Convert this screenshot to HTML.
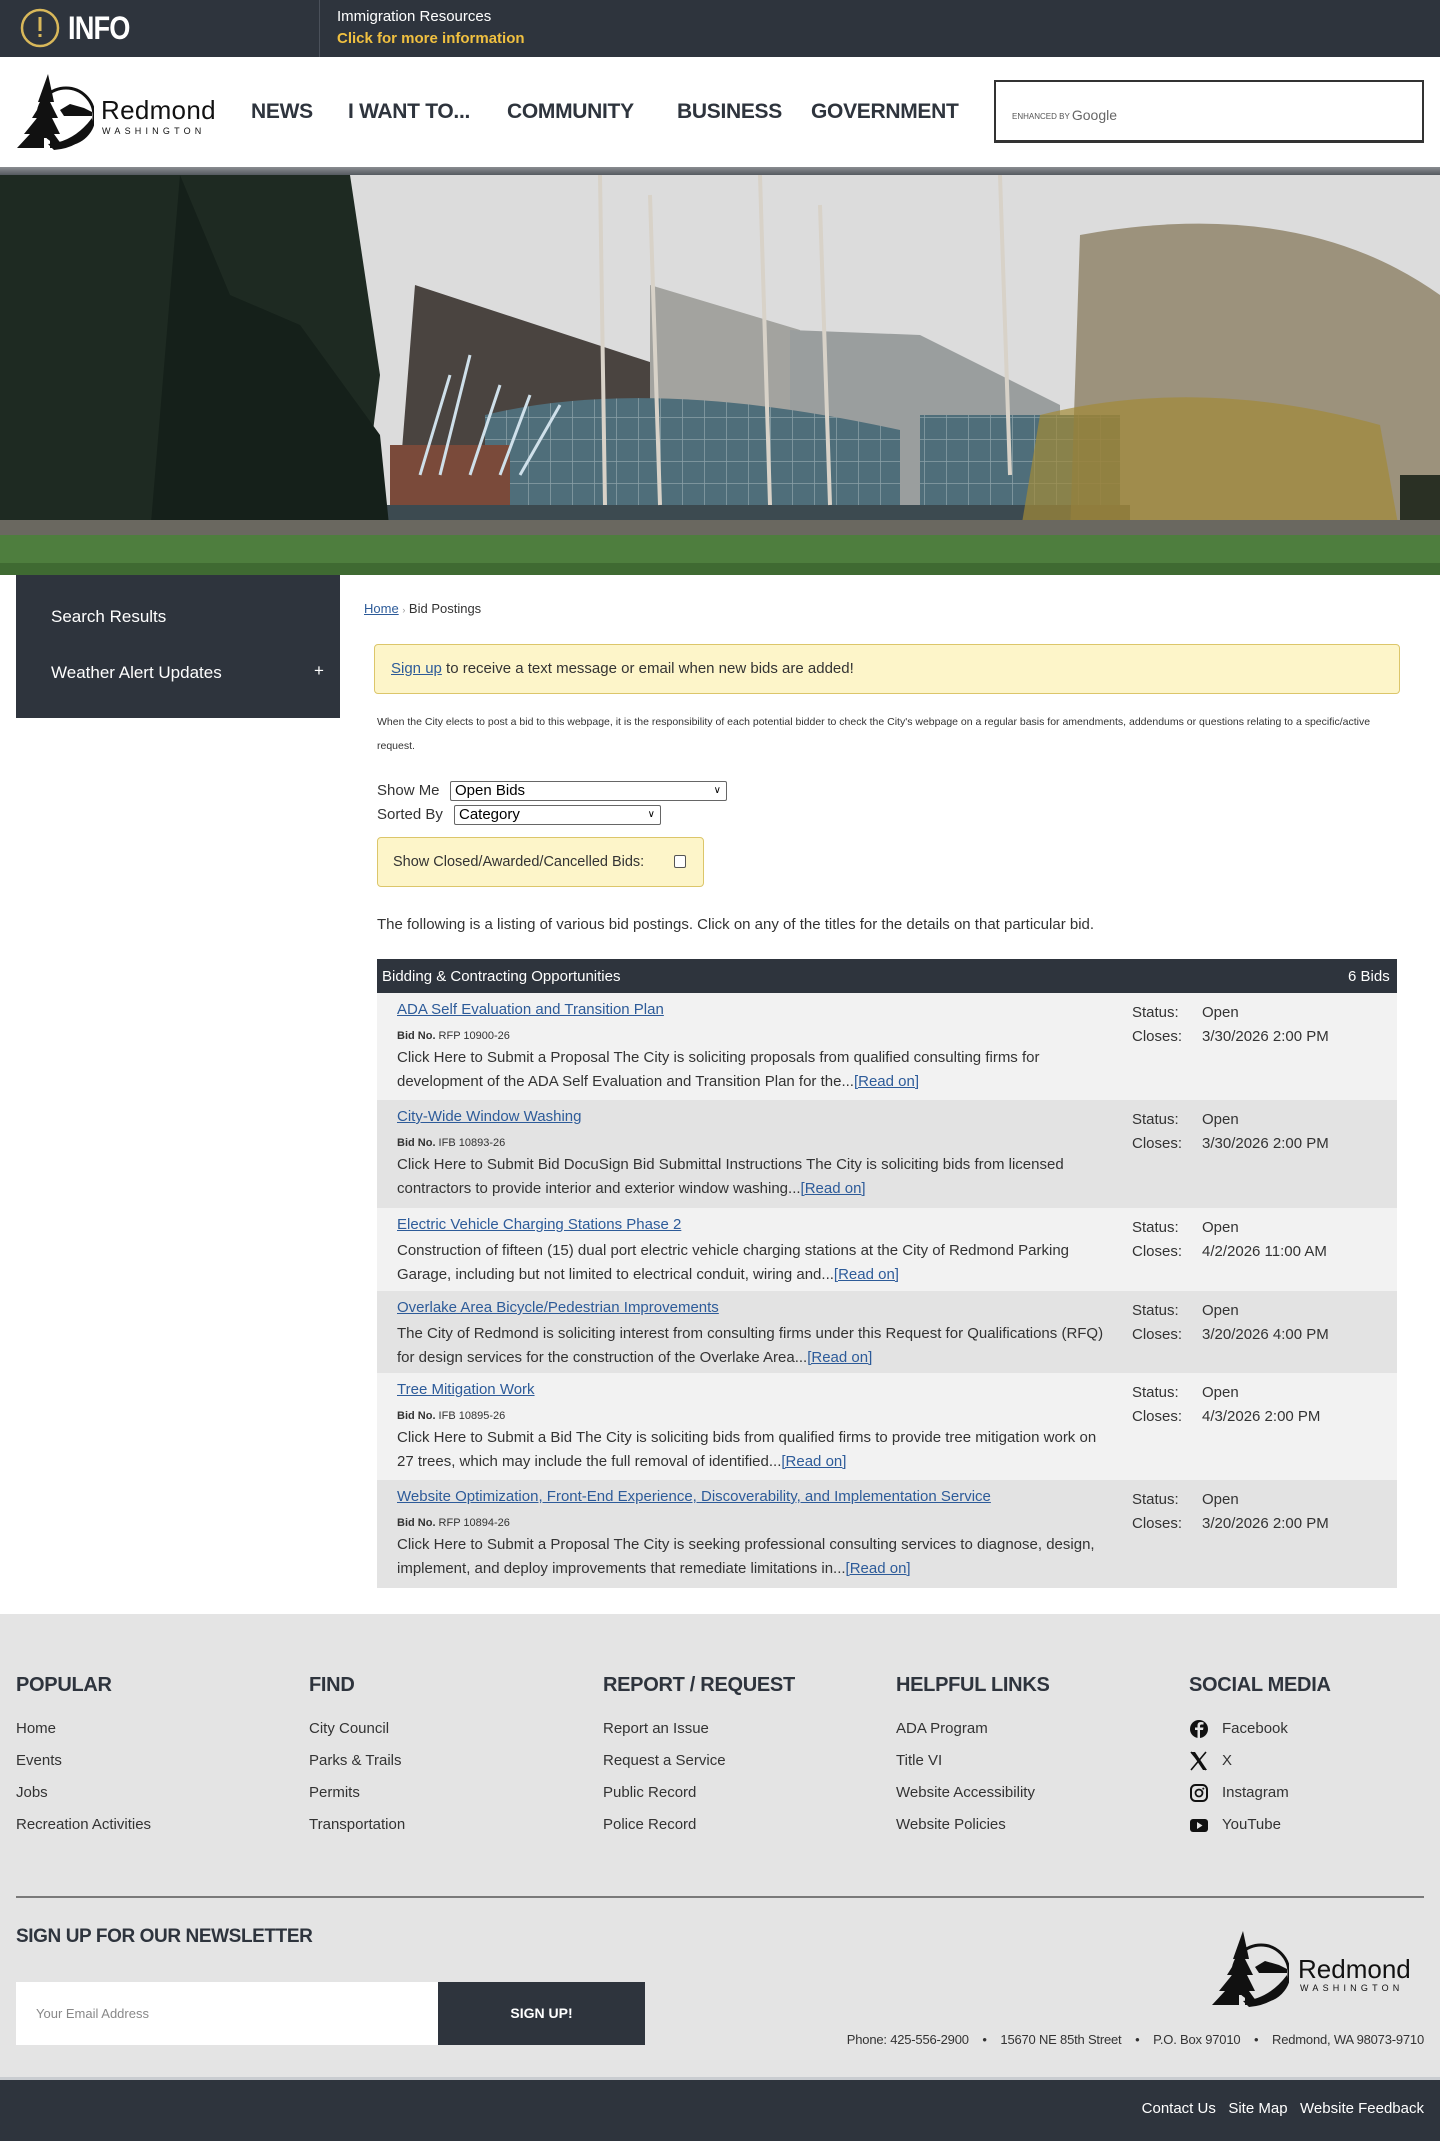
<!DOCTYPE html>
<html><head><meta charset="utf-8">
<style>
*{box-sizing:border-box;margin:0;padding:0}
body{width:1440px;height:2141px;font-family:"Liberation Sans",sans-serif;color:#2e343d;background:#fff;position:relative;overflow:hidden}
.abs{position:absolute}
a{color:#2d5b99}
.top{left:0;top:0;width:1440px;height:57px;background:#2e343d}
.hdr{left:0;top:57px;width:1440px;height:110px;background:#fff}
.nav{top:100px;font-weight:bold;font-size:21px;color:#2e343d;letter-spacing:-0.3px}
.side{left:16px;top:575px;width:324px;height:143px;background:#2e343d;color:#fff;font-size:17px}
.row{position:absolute;left:377px;width:1020px}
.row .t{position:absolute;left:20px;top:8px;font-size:15px}
.row .n{position:absolute;left:20px;font-size:11px;color:#333}
.row .d{position:absolute;left:20px;width:715px;font-size:15px;line-height:24px;color:#333}
.row .s{position:absolute;left:755px;top:8px;font-size:15px;line-height:24px;color:#333}
.row .s span{display:inline-block;width:70px}
.fh{top:1674px;font-size:20px;font-weight:bold;color:#2e343d;letter-spacing:-0.3px}
.fl{font-size:15px;color:#333;line-height:32px}
</style></head><body>
<div class="abs top"></div>
<svg class="abs" style="left:18px;top:8px" width="44" height="42"><circle cx="22" cy="20" r="18" fill="none" stroke="#d9b85a" stroke-width="2.5"/><rect x="20.5" y="9" width="3" height="14" fill="#d9b85a"/><rect x="20.5" y="26" width="3" height="3" fill="#d9b85a"/></svg>
<div class="abs" style="left:68px;top:10px;font-size:32px;font-weight:bold;color:#fff;letter-spacing:-1px;transform:scaleX(.85);transform-origin:left">INFO</div>
<div class="abs" style="left:319px;top:0;width:1px;height:57px;background:#4a505a"></div>
<div class="abs" style="left:337px;top:8px;font-size:15px;color:#fff">Immigration Resources</div>
<div class="abs" style="left:337px;top:30px;font-size:15px;color:#f0c040;font-weight:bold">Click for more information</div>

<div class="abs hdr"></div>
<svg class="abs" style="left:14px;top:72px" width="80" height="80" viewBox="0 0 80 80">
<circle cx="52" cy="44" r="28" fill="none" stroke="#111" stroke-width="3"/>
<path d="M34 2 L24 30 L28 30 L18 46 L23 46 L10 62 L16 62 L3 76 L30 76 L30 66 L36 66 L36 76 L50 76 L40 62 L46 62 L38 46 L44 46 L36 30 L40 30 Z" fill="#111"/>
<path d="M34 72 Q60 70 78 46 L78 56 Q66 76 40 78 Z" fill="#111"/>
<path d="M46 38 L56 32 L70 36 L78 40 L78 44 L50 44 Z" fill="#111"/>
</svg>
<div class="abs" style="left:101px;top:95px;font-size:26px;color:#111;letter-spacing:.3px">Redmond</div>
<div class="abs" style="left:102px;top:126px;font-size:9px;color:#111;letter-spacing:4.2px">WASHINGTON</div>
<div class="abs nav" style="left:251px">NEWS</div>
<div class="abs nav" style="left:348px">I WANT TO...</div>
<div class="abs nav" style="left:507px">COMMUNITY</div>
<div class="abs nav" style="left:677px">BUSINESS</div>
<div class="abs nav" style="left:811px">GOVERNMENT</div>
<div class="abs" style="left:994px;top:80px;width:430px;height:63px;border:2px solid #333;border-bottom-width:3px"></div>
<div class="abs" style="left:1012px;top:106px;font-size:8px;color:#555">ENHANCED BY <span style="font-size:14px;color:#666;position:relative;top:1px">Google</span></div>
<div class="abs" style="left:0;top:167px;width:1440px;height:8px;background:linear-gradient(#8a8d91,#555a60)"></div>

<svg class="abs" style="left:0;top:175px" width="1440" height="400" viewBox="0 0 1440 400" preserveAspectRatio="none">
<defs>
<pattern id="g" width="22" height="22" patternUnits="userSpaceOnUse"><rect width="22" height="22" fill="#4f6e7a"/><path d="M0 0H22M0 0V22" stroke="#8aa0a8" stroke-width="1.5"/></pattern>
</defs>
<rect width="1440" height="400" fill="#dcdcdc"/>
<polygon points="400,300 415,110 720,210 720,300" fill="#4a4440"/>
<polygon points="650,110 800,155 820,340 650,340" fill="#a3a39f"/>
<polygon points="790,155 920,160 1060,230 1060,350 790,350" fill="#9a9e9e"/>
<rect x="920" y="240" width="200" height="110" fill="url(#g)"/>
<path d="M485 340 L485 240 Q650 200 900 255 L900 340 Z" fill="url(#g)"/>
<rect x="390" y="270" width="120" height="75" fill="#7a4a3a"/>
<path d="M420 300 L450 200 M440 300 L470 180 M470 300 L500 210 M500 300 L530 220 M520 300 L560 230" stroke="#cfe0ea" stroke-width="3"/>
<rect x="330" y="330" width="800" height="25" fill="#3c4a50"/>
<path d="M0 0 L350 0 L380 200 L360 360 L0 360 Z" fill="#1e2a22"/>
<path d="M180 0 L230 120 L300 150 L380 260 L390 360 L150 360 Z" fill="#15201a"/>
<path d="M600 0 L605 330 M650 20 L660 330 M760 0 L770 330 M820 30 L830 330 M1000 0 L1010 300" stroke="#d8d2c8" stroke-width="4"/>
<path d="M1080 60 Q1300 20 1440 120 L1440 360 L1070 360 Z" fill="#7a6a48" opacity=".65"/>
<path d="M1040 240 Q1200 200 1380 250 L1400 360 L1020 360 Z" fill="#a28a38" opacity=".7"/>
<rect x="1400" y="300" width="40" height="60" fill="#2a3024"/>
<rect x="0" y="345" width="1440" height="18" fill="#6a6860"/>
<rect x="0" y="360" width="1440" height="40" fill="#4e7e3e"/>
<rect x="0" y="388" width="1440" height="12" fill="#3f6a32"/>
</svg>

<div class="abs side"></div>
<div class="abs" style="left:51px;top:607px;font-size:17px;color:#fff">Search Results</div>
<div class="abs" style="left:51px;top:663px;font-size:17px;color:#fff">Weather Alert Updates</div>
<div class="abs" style="left:314px;top:661px;font-size:17px;color:#fff">+</div>

<div class="abs" style="left:364px;top:601px;font-size:13px;color:#333"><a href="#">Home</a> <span style="color:#999;font-size:9px">›</span> Bid Postings</div>
<div class="abs" style="left:374px;top:644px;width:1026px;height:50px;background:#fdf5c9;border:1px solid #dcc66a;border-radius:4px"></div>
<div class="abs" style="left:391px;top:660px;font-size:15px;color:#333"><a href="#">Sign up</a> to receive a text message or email when new bids are added!</div>
<div class="abs" style="left:377px;top:710px;width:1000px;font-size:10.5px;line-height:24px;color:#333">When the City elects to post a bid to this webpage, it is the responsibility of each potential bidder to check the City's webpage on a regular basis for amendments, addendums or questions relating to a specific/active request.</div>
<div class="abs" style="left:377px;top:782px;font-size:15px;color:#333">Show Me</div>
<div class="abs" style="left:450px;top:781px;width:277px;height:20px;border:1px solid #666;border-radius:2px;font-size:15px;padding-left:4px;line-height:18px;color:#000">Open Bids<span style="position:absolute;right:5px;font-size:10px">∨</span></div>
<div class="abs" style="left:377px;top:806px;font-size:15px;color:#333">Sorted By</div>
<div class="abs" style="left:454px;top:805px;width:207px;height:20px;border:1px solid #666;border-radius:2px;font-size:15px;padding-left:4px;line-height:18px;color:#000">Category<span style="position:absolute;right:5px;font-size:10px">∨</span></div>
<div class="abs" style="left:377px;top:837px;width:327px;height:50px;background:#fdf5c9;border:1px solid #dcc66a;border-radius:4px"></div>
<div class="abs" style="left:393px;top:854px;font-size:14.5px;color:#333">Show Closed/Awarded/Cancelled Bids:</div>
<div class="abs" style="left:674px;top:855px;width:12px;height:13px;border:1px solid #555;border-radius:2px;background:#fff"></div>
<div class="abs" style="left:377px;top:916px;font-size:15px;color:#333">The following is a listing of various bid postings. Click on any of the titles for the details on that particular bid.</div>

<div class="abs" style="left:377px;top:959px;width:1020px;height:34px;background:#2e343d"></div>
<div class="abs" style="left:382px;top:968px;font-size:15px;color:#fff">Bidding &amp; Contracting Opportunities</div>
<div class="abs" style="left:1348px;top:968px;font-size:15px;color:#fff">6 Bids</div>

<div class="row" style="top:993px;height:107px;background:#f2f2f2">
<a class="t" href="#">ADA Self Evaluation and Transition Plan</a>
<div class="n" style="top:37px"><b>Bid No.</b> RFP 10900-26</div>
<div class="d" style="top:53px">Click Here to Submit a Proposal The City is soliciting proposals from qualified consulting firms for development of the ADA Self Evaluation and Transition Plan for the...<a href="#">[Read on]</a></div>
<div class="s"><span>Status:</span>Open<br><span>Closes:</span>3/30/2026 2:00 PM</div></div>
<div class="row" style="top:1100px;height:108px;background:#e3e3e3">
<a class="t" href="#">City-Wide Window Washing</a>
<div class="n" style="top:37px"><b>Bid No.</b> IFB 10893-26</div>
<div class="d" style="top:53px">Click Here to Submit Bid DocuSign Bid Submittal Instructions The City is soliciting bids from licensed contractors to provide interior and exterior window washing...<a href="#">[Read on]</a></div>
<div class="s"><span>Status:</span>Open<br><span>Closes:</span>3/30/2026 2:00 PM</div></div>
<div class="row" style="top:1208px;height:83px;background:#f2f2f2">
<a class="t" href="#">Electric Vehicle Charging Stations Phase 2</a>
<div class="d" style="top:31px">Construction of fifteen (15) dual port electric vehicle charging stations at the City of Redmond Parking Garage, including but not limited to electrical conduit, wiring and...<a href="#">[Read on]</a></div>
<div class="s"><span>Status:</span>Open<br><span>Closes:</span>4/2/2026 11:00 AM</div></div>
<div class="row" style="top:1291px;height:82px;background:#e3e3e3">
<a class="t" href="#">Overlake Area Bicycle/Pedestrian Improvements</a>
<div class="d" style="top:31px">The City of Redmond is soliciting interest from consulting firms under this Request for Qualifications (RFQ) for design services for the construction of the Overlake Area...<a href="#">[Read on]</a></div>
<div class="s"><span>Status:</span>Open<br><span>Closes:</span>3/20/2026 4:00 PM</div></div>
<div class="row" style="top:1373px;height:107px;background:#f2f2f2">
<a class="t" href="#">Tree Mitigation Work</a>
<div class="n" style="top:37px"><b>Bid No.</b> IFB 10895-26</div>
<div class="d" style="top:53px">Click Here to Submit a Bid The City is soliciting bids from qualified firms to provide tree mitigation work on 27 trees, which may include the full removal of identified...<a href="#">[Read on]</a></div>
<div class="s"><span>Status:</span>Open<br><span>Closes:</span>4/3/2026 2:00 PM</div></div>
<div class="row" style="top:1480px;height:108px;background:#e3e3e3">
<a class="t" href="#">Website Optimization, Front-End Experience, Discoverability, and Implementation Service</a>
<div class="n" style="top:37px"><b>Bid No.</b> RFP 10894-26</div>
<div class="d" style="top:53px">Click Here to Submit a Proposal The City is seeking professional consulting services to diagnose, design, implement, and deploy improvements that remediate limitations in...<a href="#">[Read on]</a></div>
<div class="s"><span>Status:</span>Open<br><span>Closes:</span>3/20/2026 2:00 PM</div></div>

<div class="abs" style="left:0;top:1614px;width:1440px;height:463px;background:#e4e4e4"></div>
<div class="abs fh" style="left:16px">POPULAR</div>
<div class="abs fh" style="left:309px">FIND</div>
<div class="abs fh" style="left:603px">REPORT / REQUEST</div>
<div class="abs fh" style="left:896px">HELPFUL LINKS</div>
<div class="abs fh" style="left:1189px">SOCIAL MEDIA</div>
<div class="abs fl" style="left:16px;top:1713px">Home<br>Events<br>Jobs<br>Recreation Activities</div>
<div class="abs fl" style="left:309px;top:1713px">City Council<br>Parks &amp; Trails<br>Permits<br>Transportation</div>
<div class="abs fl" style="left:603px;top:1713px">Report an Issue<br>Request a Service<br>Public Record<br>Police Record</div>
<div class="abs fl" style="left:896px;top:1713px">ADA Program<br>Title VI<br>Website Accessibility<br>Website Policies</div>
<div class="abs fl" style="left:1222px;top:1713px">Facebook<br>X<br>Instagram<br>YouTube</div>
<svg class="abs" style="left:1189px;top:1718px" width="22" height="120">
<circle cx="10" cy="11" r="9" fill="#111"/><path d="M11 20 V12 H14 L14.5 9.5 H11 V8 Q11 6.5 12.5 6.5 H14.5 V4.3 Q13 4 11.8 4 Q8.5 4 8.5 7.5 V9.5 H6 V12 H8.5 V20 Z" fill="#e4e4e4"/>
<path d="M2 34 L17 52 M17 34 L2 52" stroke="#111" stroke-width="1.6"/><path d="M2 34 H6 L18 52 H14 Z" fill="#111"/>
<rect x="2" y="67" width="16" height="16" rx="4.5" fill="none" stroke="#111" stroke-width="2"/><circle cx="10" cy="75" r="3.5" fill="none" stroke="#111" stroke-width="1.8"/><circle cx="14.3" cy="70.6" r="1" fill="#111"/>
<rect x="1" y="101" width="18" height="13" rx="3" fill="#111"/><path d="M8 104 L13.5 107.5 L8 111 Z" fill="#e4e4e4"/>
</svg>
<div class="abs" style="left:16px;top:1896px;width:1408px;height:2px;background:#7a7a7a"></div>
<div class="abs" style="left:16px;top:1926px;font-size:19px;font-weight:bold;color:#2e343d;letter-spacing:-0.4px">SIGN UP FOR OUR NEWSLETTER</div>
<div class="abs" style="left:16px;top:1982px;width:422px;height:63px;background:#fff"></div>
<div class="abs" style="left:36px;top:2006px;font-size:13px;color:#888">Your Email Address</div>
<div class="abs" style="left:438px;top:1982px;width:207px;height:63px;background:#2e343d;color:#fff;font-weight:bold;font-size:14px;text-align:center;line-height:63px">SIGN UP!</div>
<svg class="abs" style="left:1209px;top:1928px" width="80" height="82" viewBox="0 0 80 80">
<circle cx="52" cy="44" r="28" fill="none" stroke="#111" stroke-width="3"/>
<path d="M34 2 L24 30 L28 30 L18 46 L23 46 L10 62 L16 62 L3 76 L30 76 L30 66 L36 66 L36 76 L50 76 L40 62 L46 62 L38 46 L44 46 L36 30 L40 30 Z" fill="#111"/>
<path d="M34 72 Q60 70 78 46 L78 56 Q66 76 40 78 Z" fill="#111"/>
<path d="M46 38 L56 32 L70 36 L78 40 L78 44 L50 44 Z" fill="#111"/>
</svg>
<div class="abs" style="left:1298px;top:1954px;font-size:26px;color:#111">Redmond</div>
<div class="abs" style="left:1300px;top:1983px;font-size:9px;color:#111;letter-spacing:4.2px">WASHINGTON</div>
<div class="abs" style="right:16px;top:2032px;font-size:13px;color:#333;letter-spacing:-0.2px;white-space:nowrap">Phone: 425-556-2900 &nbsp;&nbsp;&nbsp;•&nbsp;&nbsp;&nbsp; 15670 NE 85th Street &nbsp;&nbsp;&nbsp;•&nbsp;&nbsp;&nbsp; P.O. Box 97010 &nbsp;&nbsp;&nbsp;•&nbsp;&nbsp;&nbsp; Redmond, WA 98073-9710</div>
<div class="abs" style="left:0;top:2077px;width:1440px;height:64px;background:#2e343d;border-top:3px solid #c9ccd0"></div>
<div class="abs" style="right:16px;top:2100px;font-size:15px;color:#fff">Contact Us &nbsp;&nbsp;Site Map &nbsp;&nbsp;Website Feedback</div>
</body></html>
